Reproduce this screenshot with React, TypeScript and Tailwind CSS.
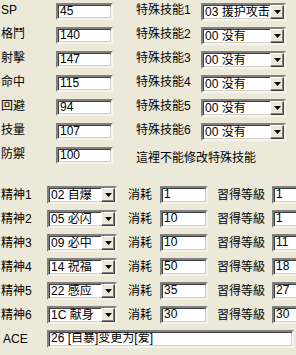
import React from "react";

const FONT = "font-['Liberation_Sans','Noto_Sans_CJK_SC',sans-serif]";
const SUNKEN =
  "border-2 border-t-[#808080] border-l-[#808080] border-r-[#f4f3ee] border-b-[#f4f3ee] shadow-[inset_1px_1px_0_#404040,inset_-1px_-1px_0_#d4d0c8] bg-white";

const stats = [
  ["SP", "45"],
  ["格鬥", "140"],
  ["射擊", "147"],
  ["命中", "115"],
  ["回避", "94"],
  ["技量", "107"],
  ["防禦", "100"],
];

const skills = ["03 援护攻击", "00 没有", "00 没有", "00 没有", "00 没有", "00 没有"];

const spirits = [
  ["02 自爆", "1", "1"],
  ["05 必闪", "10", "1"],
  ["09 必中", "10", "11"],
  ["14 祝福", "50", "18"],
  ["22 感应", "35", "27"],
  ["1C 献身", "30", "30"],
];

function TextBox({ value, className }: { value: string; className: string }) {
  return (
    <div className={`${SUNKEN} shrink-0 pl-[2px] text-[12px] leading-[13px] overflow-hidden whitespace-nowrap ${className}`}>
      {value}
    </div>
  );
}

function Combo({ value, className }: { value: string; className: string }) {
  return (
    <div className={`${SUNKEN} shrink-0 h-[18px] flex items-stretch overflow-hidden ${className}`}>
      <span className="flex-1 pl-[2px] text-[12px] leading-[14px] whitespace-nowrap overflow-hidden">{value}</span>
      <span className="w-[14px] shrink-0 bg-[#ece9d8] border border-t-white border-l-white border-r-[#404040] border-b-[#404040] shadow-[inset_-1px_-1px_0_#808080] flex items-center justify-center">
        <svg width="7" height="4" viewBox="0 0 7 4">
          <path d="M0 0h7L3.5 4z" fill="#000" />
        </svg>
      </span>
    </div>
  );
}

export default function App() {
  return (
    <div className={`w-[296px] h-[355px] bg-[#ece9d8] text-black text-[12px] overflow-hidden ${FONT}`}>
      <div className="flex pt-[3px]">
        <div className="w-[136px] shrink-0 flex flex-col">
          {stats.map(([label, v]) => (
            <div key={label} className="h-[24px] flex items-start">
              <span className="w-[56px] shrink-0 pl-[1px] leading-[15px]">{label}</span>
              <TextBox value={v} className="w-[57px] h-[17px]" />
            </div>
          ))}
        </div>
        <div className="flex-1 flex flex-col">
          {skills.map((s, i) => (
            <div key={i} className="h-[24px] flex items-start">
              <span className="w-[65px] shrink-0 leading-[15px] whitespace-nowrap">特殊技能{i + 1}</span>
              <Combo value={s} className="w-[85px]" />
            </div>
          ))}
          <div className="pt-[4px] leading-[15px]">這裡不能修改特殊技能</div>
        </div>
      </div>
      <div className="flex flex-col pt-[15px]">
        {spirits.map(([s, cost, lv], i) => (
          <div key={i} className="h-[24px] flex items-start">
            <span className="w-[47px] shrink-0 pl-[1px] leading-[18px]">精神{i + 1}</span>
            <Combo value={s} className="w-[70px]" />
            <span className="w-[32px] shrink-0 pl-[11px] leading-[18px] whitespace-nowrap box-content">消耗</span>
            <TextBox value={cost} className="w-[48px] h-[18px]" />
            <span className="w-[55px] shrink-0 pl-[9px] leading-[18px] whitespace-nowrap box-content">習得等級</span>
            <TextBox value={lv} className="w-[40px] h-[18px]" />
          </div>
        ))}
        <div className="h-[24px] flex items-start">
          <span className="w-[47px] shrink-0 pl-[3px] leading-[18px]">ACE</span>
          <TextBox value="26 [自暴]变更为[爱]" className="w-[247px] h-[18px]" />
        </div>
      </div>
    </div>
  );
}
